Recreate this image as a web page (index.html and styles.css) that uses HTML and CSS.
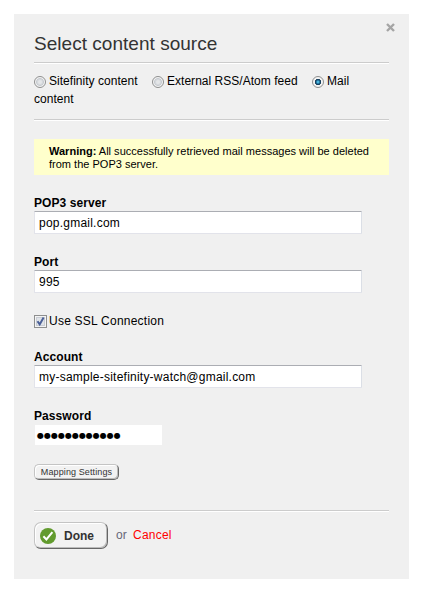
FILE: index.html
```html
<!DOCTYPE html>
<html>
<head>
<meta charset="utf-8">
<title>Select content source</title>
<link rel="stylesheet" href="styles.css">
</head>
<body>
<form class="dialog">
  <button type="button" class="close" aria-label="Close">
    <svg width="9" height="9" viewBox="0 0 9 9"><path d="M1 1l7 7M8 1l-7 7" stroke="#a5a5a5" stroke-width="2.4"/></svg>
  </button>
  <h1>Select content source</h1>

  <div class="sources">
    <label><input type="radio" name="source" class="radio">Sitefinity content</label>
    <label><input type="radio" name="source" class="radio">External RSS/Atom feed</label>
    <label><input type="radio" name="source" class="radio" checked>Mail content</label>
  </div>

  <p class="warning"><strong>Warning:</strong> All successfully retrieved mail messages will be deleted from the POP3 server.</p>

  <div class="field">
    <label for="server">POP3 server</label>
    <input type="text" id="server" class="text" value="pop.gmail.com">
  </div>
  <div class="field">
    <label for="port">Port</label>
    <input type="text" id="port" class="text" value="995">
  </div>
  <label class="ssl">
    <svg width="13" height="13" viewBox="0 0 13 13">
      <rect x=".5" y=".5" width="12" height="12" fill="#f4f4f4" stroke="#8e8f8f"/>
      <rect x="2.5" y="2.5" width="8" height="8" fill="#dfe3e8" stroke="#c9cdd4"/>
      <path d="M3.5 6.2l2.2 3.2 3.9-6.8" fill="none" stroke="#4a5f97" stroke-width="2"/>
    </svg>Use SSL Connection
  </label>
  <div class="field">
    <label for="account">Account</label>
    <input type="text" id="account" class="text" value="my-sample-sitefinity-watch@gmail.com">
  </div>
  <div class="field">
    <label for="password">Password</label>
    <div class="password" id="password">●●●●●●●●●●●●</div>
  </div>
  <button type="button" class="mapping">Mapping Settings</button>

  <div class="actions">
    <button type="button" class="done">
      <svg width="16" height="16" viewBox="0 0 16 16">
        <circle cx="8" cy="8" r="8" fill="#629b2e"/>
        <path d="M3.4 8.3l3 3.2 6-7.4" fill="none" stroke="#fff" stroke-width="2"/>
      </svg>
      Done
    </button>
    <span class="or">or</span>
    <a class="cancel">Cancel</a>
  </div>
</form>
</body>
</html>
```
FILE: styles.css
```css
* {
    box-sizing: border-box;
}
body {
    margin: 14px 13px 13px 14px;
    background: #fff;
    color: #000;
    font: 12px/18px "Liberation Sans", Arial, sans-serif;
}
.dialog {
    position: relative;
    width: 395px;
    height: 565px;
    padding: 17px 20px 0;
    background: #f0f0f0;
}
button {
    font-family: inherit;
    margin: 0;
}
.close {
    position: absolute;
    top: 9px;
    right: 14px;
    width: 9px;
    height: 9px;
    padding: 0;
    border: 0;
    background: none;
}
.close svg {
    display: block;
}
h1 {
    height: 32px;
    margin: 0;
    border-bottom: 1px solid #ccc;
    box-shadow: 0 1px #fff;
    color: #333;
    font-size: 19px;
    font-weight: normal;
    line-height: 26px;
    letter-spacing: .03px;
}
.sources {
    height: 57px;
    padding-top: 9px;
    border-bottom: 1px solid #ccc;
    box-shadow: 0 1px #fff;
    letter-spacing: .03px;
}
.sources label {
    margin-right: 11px;
}
.radio {
    appearance: none;
    width: 12px;
    height: 12px;
    margin: 0 3px 0 0;
    border: 1px solid #8e8f8f;
    border-radius: 50%;
    background: radial-gradient(circle at 50% 50%, #e4e6e8 20%, #c8ccd1 50%, #f4f4f4 62%);
    vertical-align: -3px;
}
.radio:checked {
    background: radial-gradient(circle at 50% 50%, #4fc0e8 8%, #14547e 30%, #12344f 40%, #f4f4f4 50%);
}
.warning {
    height: 36px;
    margin: 19px 0;
    padding: 6px 15px;
    background: #ffc;
    font-size: 11px;
    line-height: 13px;
    letter-spacing: .01px;
}
.field {
    margin-bottom: 19px;
}
.field label {
    display: block;
    height: 17px;
    font-weight: bold;
    letter-spacing: .08px;
}
.text {
    display: block;
    width: 328px;
    height: 23px;
    padding: 0 4px;
    border: 1px solid #e2e3ea;
    border-top-color: #abadb3;
    border-right-color: #dbdfe6;
    border-radius: 1px;
    background: #fff;
    color: #000;
    font: inherit;
    letter-spacing: .23px;
}
.ssl {
    display: flex;
    align-items: center;
    gap: 2px;
    height: 18px;
    margin-bottom: 18px;
    letter-spacing: .23px;
}
.password {
    width: 127px;
    height: 20px;
    margin: 1px 0 0 1px;
    padding-left: 2px;
    background: #fff;
    font: 8px/21px "DejaVu Sans", sans-serif;
}
.mapping {
    display: block;
    width: 85px;
    height: 16px;
    padding: 0;
    border: 1px solid #c4c4c4;
    border-right-color: #666;
    border-bottom-color: #666;
    border-radius: 5px;
    background: #f2f2f2;
    box-shadow: inset 1px 1px #fff, inset -1px -1px #bbb;
    color: #333;
    font-size: 9px;
    line-height: 13px;
    letter-spacing: .12px;
}
.actions {
    display: flex;
    margin-top: 30px;
    padding-top: 11px;
    border-top: 1px solid #ccc;
    box-shadow: inset 0 1px #fff;
}
.done {
    display: flex;
    align-items: center;
    gap: 8px;
    width: 74px;
    height: 27px;
    padding: 0 0 0 5px;
    border: 1px solid #c4c4c4;
    border-right-color: #666;
    border-bottom-color: #666;
    border-radius: 7px;
    background: #f2f2f2;
    box-shadow: inset 1px 1px #fff, inset -1px -1px #bbb;
    color: #333;
    font-size: 12px;
    font-weight: bold;
}
.or {
    margin-left: 8px;
    color: #667;
    line-height: 26px;
    letter-spacing: .2px;
}
.cancel {
    margin-left: 6px;
    color: #f00;
    line-height: 26px;
    letter-spacing: .2px;
}
```
